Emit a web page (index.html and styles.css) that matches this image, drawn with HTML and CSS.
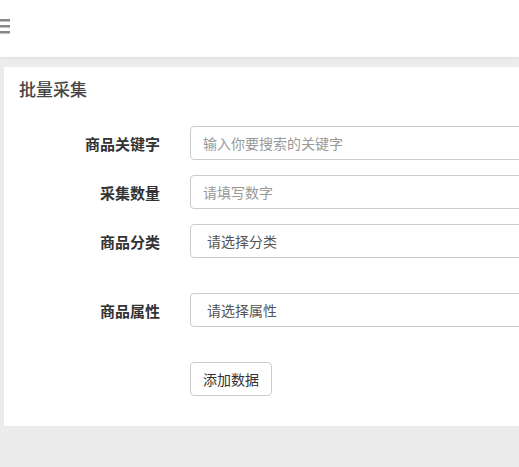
FILE: index.html
```html
<!DOCTYPE html>
<html lang="zh-CN">
<head>
<meta charset="utf-8">
<title>批量采集</title>
<link rel="stylesheet" href="styles.css">
</head>
<body>
<header class="topbar">
  <svg class="menu-icon" width="10" height="16" viewBox="0 0 10 16" aria-hidden="true">
    <rect x="0" y="0" width="10" height="2.5" fill="#888"/>
    <rect x="0" y="6" width="10" height="2.5" fill="#888"/>
    <rect x="0" y="12" width="10" height="2.5" fill="#888"/>
  </svg>
</header>
<main class="content">
  <section class="card">
    <h2 class="card-title">批量采集</h2>
    <form class="form">
      <div class="row">
        <label class="label">商品关键字</label>
        <div class="field"><span class="input placeholder">输入你要搜索的关键字</span></div>
      </div>
      <div class="row">
        <label class="label">采集数量</label>
        <div class="field"><span class="input placeholder">请填写数字</span></div>
      </div>
      <div class="row row-wide">
        <label class="label">商品分类</label>
        <div class="field"><span class="input select">请选择分类</span></div>
      </div>
      <div class="row row-wide">
        <label class="label">商品属性</label>
        <div class="field"><span class="input select">请选择属性</span></div>
      </div>
      <div class="row row-last">
        <span class="label"></span>
        <div class="field"><button type="button" class="btn">添加数据</button></div>
      </div>
    </form>
  </section>
</main>
</body>
</html>
```
FILE: styles.css
```css
html, body {
  margin: 0;
  padding: 0;
  overflow: hidden;
  height: 100%;
}
body {
  background: #ececec;
  font-family: "Noto Sans CJK SC", "Liberation Sans", sans-serif;
  font-size: 14px;
  color: #333;
}
.topbar {
  height: 57px;
  background: #fff;
  box-shadow: 0 1px 3px rgba(0,0,0,0.07);
  display: flex;
  align-items: flex-start;
  padding-top: 19px;
  box-sizing: border-box;
  position: relative;
}
.menu-icon {
  display: block;
}
.content {
  padding: 10px 0 0 4px;
}
.card {
  width: 800px;
  height: 359px;
  background: #fff;
  box-sizing: border-box;
  padding: 11px 0 0 0;
}
.card-title {
  margin: 0;
  padding: 0 15px;
  font-size: 17px;
  font-weight: 500;
  line-height: 22px;
  color: #444;
}
.form {
  margin-top: 26px;
}
.row {
  display: flex;
  align-items: center;
  height: 34px;
  margin-bottom: 15px;
}
.row-wide {
  margin-bottom: 35px;
}
.label {
  width: 156px;
  text-align: right;
  font-weight: bold;
  color: #333;
  font-size: 15px;
  flex: none;
}
.field {
  margin-left: 30px;
  flex: 1;
}
.input {
  display: flex;
  align-items: center;
  height: 34px;
  box-sizing: border-box;
  border: 1px solid #ccc;
  border-radius: 4px;
  padding: 0 12px;
  width: 100%;
  font-size: 14px;
}
.placeholder {
  color: #999;
}
.select {
  color: #555;
  padding-left: 16px;
}
.btn {
  height: 34px;
  box-sizing: border-box;
  padding: 0 12px;
  border: 1px solid #ccc;
  border-radius: 4px;
  background: #fff;
  color: #333;
  font-family: inherit;
  font-size: 14px;
  line-height: 32px;
}
```
